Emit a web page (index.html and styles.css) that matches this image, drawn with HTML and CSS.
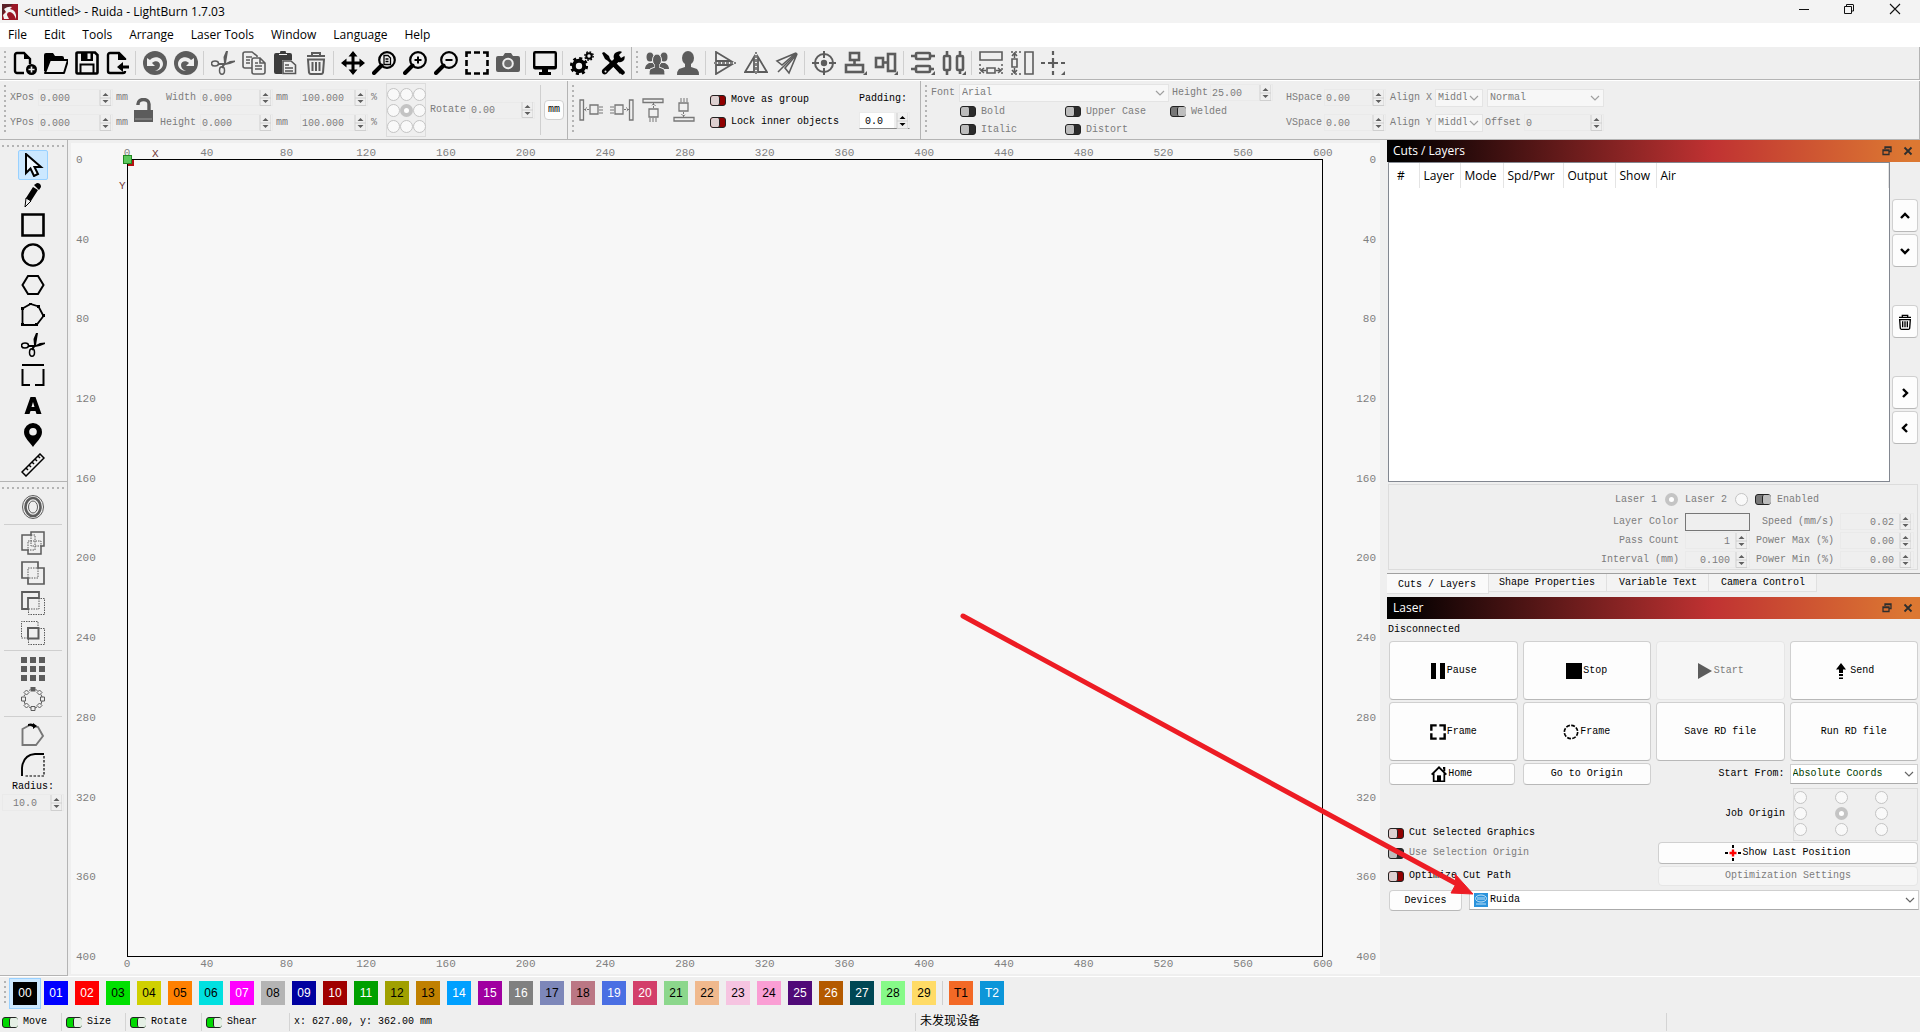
FILE: index.html
```html
<!DOCTYPE html>
<html lang="en">
<head>
<meta charset="utf-8">
<title>&lt;untitled&gt; - Ruida - LightBurn 1.7.03</title>
<link rel="stylesheet" href="styles.css">
</head>
<body>
<svg class="defs" aria-hidden="true">
  <symbol id="new" viewBox="0 0 24 24"><path d="M11 22H4a2 2 0 0 1-2-2V4a2 2 0 0 1 2-2h7l6 6v5" fill="none" stroke="currentColor" stroke-width="2.4"/><path d="M11 1l7 7h-7z"/><circle cx="18.500" cy="18.500" r="5.500"/><path d="M18.500 15.500v6M15.500 18.500h6" stroke="#efefef" stroke-width="1.600"/></symbol>
  <symbol id="open" viewBox="0 0 24 24"><path d="M6 9h18l-4 13H1z" fill="none" stroke="currentColor" stroke-width="2" stroke-linejoin="round"/><path d="M0 4q0-2 2-2h7l2 3h7q2 0 2 2v1H6L2 20H0z"/></symbol>
  <symbol id="save" viewBox="0 0 24 24"><path d="M1.500 2.500a1 1 0 0 1 1-1H20l2.500 2.500v17.500a1 1 0 0 1-1 1h-19a1 1 0 0 1-1-1z" fill="none" stroke="currentColor" stroke-width="2.600"/><path d="M6 1h12v9H6z"/><path d="M12.500 2.500h3v5.500h-3z" fill="#efefef"/><path d="M5.500 22v-8.500h13V22" fill="none" stroke="currentColor" stroke-width="2"/></symbol>
  <symbol id="import" viewBox="0 0 24 24"><path d="M19 9V8l-6-6H4a2 2 0 0 0-2 2v16a2 2 0 0 0 2 2h13a2 2 0 0 0 2-2" fill="none" stroke="currentColor" stroke-width="2.400"/><path d="M12 1l8 8h-8zM11 16l6-5v3.500h6v3h-6V21z"/></symbol>
  <symbol id="undo" viewBox="0 0 24 24"><circle cx="12" cy="12" r="12"/><path d="M4 7v8h8l-3-3c3-3 8-2 8 2 0 3-2 5-5 6 4 0 8-3 8-7 0-7-9-9-13-4z" fill="#efefef"/></symbol>
  <symbol id="cut" viewBox="0 0 24 24"><path d="M13 12L12.500 6 15 0h2l-2 12-2 3zM13 13l6-3 5-.500v1.500l-5 2-5 1z"/><path d="M13 13H8M13 13l-2 4" stroke="currentColor" stroke-width="2"/><ellipse cx="4" cy="12.500" rx="3.500" ry="2.500" fill="none" stroke="currentColor" stroke-width="1.500"/><ellipse cx="11" cy="19.500" rx="2.500" ry="3.700" fill="none" stroke="currentColor" stroke-width="1.500"/></symbol>
  <symbol id="copy" viewBox="0 0 24 24"><g fill="none" stroke="currentColor" stroke-width="1.600"><path d="M10 17H3a2 2 0 0 1-2-2V3a2 2 0 0 1 2-2h7l5 4v1M12 7h6l5 5v9a2 2 0 0 1-2 2h-9a2 2 0 0 1-2-2V9a2 2 0 0 1 2-2zM18 7v5h5"/><path d="M4 6h6M4 9h4M4 12h4M13 12h3M13 15h7M13 18h7"/></g></symbol>
  <symbol id="paste" viewBox="0 0 24 24"><path d="M1 4a2 2 0 0 1 2-2h4a3 3 0 0 1 6 0h4a2 2 0 0 1 2 2v5H9v14H3a2 2 0 0 1-2-2z" fill="#3c3c3c"/><path d="M6 3.500h8" stroke="#efefef"/><path d="M10 10h8l4.500 4v8.500H10z" fill="#efefef" stroke="#555" stroke-width="1.600"/><path d="M12 14h4M12 17h8M12 20h8" stroke="#555" stroke-width="1.500"/></symbol>
  <symbol id="trash" viewBox="0 0 24 24"><path d="M3 5h18M4 8.500l1 13a2 2 0 0 0 2 1.500h10a2 2 0 0 0 2-1.500l1-13zM8 4V2h8v2M8.500 11v9M12 11v9M15.500 11v9" fill="none" stroke="currentColor" stroke-width="2"/></symbol>
  <symbol id="move" viewBox="0 0 24 24"><path d="M12 2v20M2 12h20" stroke="currentColor" stroke-width="3"/><path d="M12 0l4.500 5.500h-9zM12 24l-4.500-5.500h9zM0 12l5.500-4.500v9zM24 12l-5.500 4.500v-9z"/></symbol>
  <symbol id="lens" viewBox="0 0 24 24"><circle cx="15" cy="9" r="7.800" fill="none" stroke="currentColor" stroke-width="2.200"/><path d="M9.500 14.500L2 22" stroke="currentColor" stroke-width="4" stroke-linecap="round"/></symbol>
  <symbol id="zpage" viewBox="0 0 24 24"><use href="#lens"/><path d="M12 4.500h4l2.500 2.500v6.500H12zM13.500 8h3M13.500 10.500h3" fill="none" stroke="currentColor" stroke-width="1.300"/></symbol>
  <symbol id="zin" viewBox="0 0 24 24"><use href="#lens"/><path d="M11.500 9h7M15 5.500v7" stroke="currentColor" stroke-width="2"/></symbol>
  <symbol id="zout" viewBox="0 0 24 24"><use href="#lens"/><path d="M11.500 9h7" stroke="currentColor" stroke-width="2"/></symbol>
  <symbol id="frame" viewBox="0 0 24 24"><path d="M1.500 6V1.500H6M18 1.500h4.500V6M22.500 18v4.500H18M6 22.500H1.500V18M9 1.500h6M9 22.500h6M1.500 9v6M22.500 9v6" fill="none" stroke="currentColor" stroke-width="2.600"/></symbol>
  <symbol id="camera" viewBox="0 0 24 24"><path d="M2 5h5l2-3h6l2 3h5a2 2 0 0 1 2 2v12a2 2 0 0 1-2 2H2a2 2 0 0 1-2-2V7a2 2 0 0 1 2-2z"/><circle cx="12" cy="12.500" r="4.800" fill="#707070" stroke="#efefef" stroke-width="2"/></symbol>
  <symbol id="monitor" viewBox="0 0 24 24"><rect x="1.200" y="1.200" width="21.600" height="16" rx="1" fill="none" stroke="currentColor" stroke-width="2.400"/><path d="M1 15h22v3H1zM9 18h6v3h3v3H6v-3h3z"/></symbol>
  <symbol id="gears" viewBox="0 0 24 24"><circle cx="9" cy="15" r="5.200" fill="none" stroke="currentColor" stroke-width="4"/><circle cx="9" cy="15" r="7.800" fill="none" stroke="currentColor" stroke-width="2.600" stroke-dasharray="3.060 3.060"/><circle cx="19" cy="5" r="2.700" fill="none" stroke="currentColor" stroke-width="2"/><circle cx="19" cy="5" r="4.200" fill="none" stroke="currentColor" stroke-width="1.400" stroke-dasharray="1.650 1.650"/></symbol>
  <symbol id="tools" viewBox="0 0 24 24"><path d="M1 2l2-1 5 4 1 3 12 12-2 3L7 10 4 8zM16 1c2-1 4-1 5 0l-3 3 2 3 3.500-2c1 4-2 7-6 6L7 21c-1 2-3 3-5 2-2-2-1-4 0-5L13 8c-1-3 0-6 3-7z"/><path d="M14 14l7.500 7.500" stroke="currentColor" stroke-width="4.500" stroke-linecap="round"/><circle cx="4.500" cy="20.500" r="1" fill="#efefef"/></symbol>
  <symbol id="user" viewBox="0 0 24 24"><ellipse cx="12" cy="7" rx="6" ry="7"/><path d="M9 12h6v4l6 2q2 2 2 6H1q0-4 2-6l6-2z"/></symbol>
  <symbol id="group" viewBox="0 0 24 24"><ellipse cx="5" cy="6" rx="3.500" ry="4.500"/><ellipse cx="19" cy="6" rx="3.500" ry="4.500"/><path d="M0 18q0-4 4-6h16q4 2 4 6z"/><g stroke="#efefef"><ellipse cx="12" cy="9" rx="4.500" ry="6"/><path d="M10 14h4v2l5 2q1 2 1 6H4q0-4 1-6l5-2z"/></g><path d="M10 13h4v5h-4z"/></symbol>
  <symbol id="flipv" viewBox="0 0 24 24"><path d="M3 1v9h15zM3 23v-9h15z" fill="none" stroke="currentColor" stroke-width="1.800"/><path d="M1 12h22" stroke="currentColor" stroke-width="1.500" stroke-dasharray="3 1"/></symbol>
  <symbol id="flipd" viewBox="0 0 24 24"><path d="M21 2L2 10l5 4zM22 3l-8 19-4-5z" fill="none" stroke="currentColor" stroke-width="1.600"/><path d="M22 2L3 21" stroke="currentColor" stroke-width="1.600"/></symbol>
  <symbol id="target" viewBox="0 0 24 24"><circle cx="12" cy="12" r="9" fill="none" stroke="currentColor" stroke-width="2"/><path d="M12 0v7M12 17v7M0 12h7M17 12h7" stroke="currentColor" stroke-width="2"/><circle cx="12" cy="12" r="3.200"/></symbol>
  <symbol id="alignc" viewBox="0 0 24 24"><g fill="none" stroke="currentColor" stroke-width="2.600"><rect x="7" y="2" width="9" height="7"/><rect x="3" y="14" width="17" height="7"/><path d="M11.500 9v5"/></g><path d="M24 20v4h-4z"/></symbol>
  <symbol id="alignm" viewBox="0 0 24 24"><g fill="none" stroke="currentColor" stroke-width="2.600"><rect x="2" y="7" width="7" height="9"/><rect x="14" y="3" width="7" height="17"/><path d="M9 11.500h5"/></g><path d="M24 20v4h-4z"/></symbol>
  <symbol id="distc" viewBox="0 0 24 24"><g fill="none" stroke="currentColor" stroke-width="2.600"><rect x="5" y="2" width="14" height="6" rx="1"/><rect x="5" y="15" width="14" height="6" rx="1"/><path d="M0 5h5M19 5h5M0 18h5M19 18h4"/></g><path d="M24 20v4h-4z"/></symbol>
  <symbol id="distm" viewBox="0 0 24 24"><g fill="none" stroke="currentColor" stroke-width="2.600"><rect x="2" y="5" width="6" height="14" rx="1"/><rect x="15" y="5" width="6" height="14" rx="1"/><path d="M5 0v5M5 19v5M18 0v5M18 19v4"/></g><path d="M24 20v4h-4z"/></symbol>
  <symbol id="samew" viewBox="0 0 24 24"><path d="M1 1h22v8H1zM8 17h8v5H8z" fill="none" stroke="currentColor" stroke-width="1.600"/><path d="M1 13v11M23 13v11" stroke="currentColor" stroke-width="1.500" stroke-dasharray="2 2"/><path d="M2 19.500h5M17 19.500h5M5 17l-3 2.500L5 22M19 17l3 2.500-3 2.500" fill="none" stroke="currentColor" stroke-width="1.500"/></symbol>
  <symbol id="cross" viewBox="0 0 24 24"><path d="M12 0v4M12 20v4M0 12h4M20 12h4M12 7v10M7 12h10" stroke="currentColor" stroke-width="2.200"/><path d="M24 20v4h-4z"/></symbol>
  <symbol id="lock" viewBox="0 0 20 24"><path d="M4 7V6c0-6 11-6 11 0v6" fill="none" stroke="currentColor" stroke-width="3.400"/><path d="M0 12h19v12H0z"/><path d="M1 21h17" stroke="#999"/></symbol>
  <symbol id="dock" viewBox="0 0 24 24"><path d="M1 2h3.500v20H1zM11 7h8v9h-8z" fill="none" stroke="currentColor" stroke-width="1.300"/><path d="M5 11.500h5M8 9.500l-2.500 2L8 13.500M21 8v8M23 8v8" fill="none" stroke="currentColor" stroke-width="1" stroke-dasharray="2 1"/></symbol>
  <symbol id="arrow" viewBox="0 0 24 24"><path d="M5 1v19l4.500-4.500L13 23l4-2-3.500-7H20z" fill="#eef7ff" stroke="currentColor" stroke-width="2"/></symbol>
  <symbol id="pencil" viewBox="0 0 24 24"><path d="M13 2l3-2q4 0 4 4l-2 3zM12 4l5 3-7 11-5-3z"/><path d="M5 15l5 3-6 6z" fill="none" stroke="currentColor"/></symbol>
  <symbol id="rect" viewBox="0 0 24 24"><path d="M1.500 1.500h21v21h-21z" fill="none" stroke="currentColor" stroke-width="2.600"/></symbol>
  <symbol id="circle" viewBox="0 0 24 24"><circle cx="12" cy="12" r="10.600" fill="none" stroke="currentColor" stroke-width="2.400"/></symbol>
  <symbol id="hex" viewBox="0 0 24 24"><path d="M1.500 12L7 3h10l5.500 9L17 21H7z" fill="none" stroke="currentColor" stroke-width="2"/></symbol>
  <symbol id="poly" viewBox="0 0 24 24"><path d="M1.500 5.500L9.500 1l8 2.500 5 9.500-7 9h-14z" fill="none" stroke="currentColor" stroke-width="1.800"/><path d="M0 4h3v3H0zM8 0h3v2H8zM16 2h3v3h-3zM21 11h3v3h-3zM14 20h3v3h-3zM0 20h3v3H0z"/></symbol>
  <symbol id="tabs" viewBox="0 0 24 24"><path d="M1 2h22M1.500 6v16H9M22.500 6v16H14" fill="none" stroke="currentColor" stroke-width="2"/></symbol>
  <symbol id="texta" viewBox="0 0 24 24"><path d="M3.500 21L9.500 4h5l6 17h-5l-1-3h-5l-1 3zM10.500 14h3L12 9z" fill-rule="evenodd"/></symbol>
  <symbol id="pin" viewBox="0 0 24 24"><path d="M12 0a9 9 0 0 1 9 9c0 6-6 10-9 15C9 19 3 15 3 9a9 9 0 0 1 9-9zm0 5a3.800 3.800 0 1 0 0 7.600A3.800 3.800 0 0 0 12 5z" fill-rule="evenodd"/></symbol>
  <symbol id="ruler" viewBox="0 0 24 24"><path d="M1 19L19 1l4 4L5 23zM5 15l2 2M8 12l2 2M11 9l2 2M14 6l2 2M17 3l2 2" fill="none" stroke="currentColor" stroke-width="1.500"/></symbol>
  <symbol id="offset" viewBox="0 0 24 24"><g fill="none" stroke="currentColor"><ellipse cx="12" cy="12" rx="10.500" ry="11.500"/><ellipse cx="12" cy="12" rx="7.500" ry="9" stroke-width="2.600"/><ellipse cx="12" cy="12" rx="4.500" ry="6"/></g></symbol>
  <symbol id="union3" viewBox="0 0 24 24"><path d="M1 4h9V1h13v14h-3v8H7v-4H1z" fill="none" stroke="currentColor" stroke-width="1.500"/><path d="M10 4h4v15H7v-9h13v5H10z" fill="none" stroke="currentColor" stroke-dasharray="1.500 1"/></symbol>
  <symbol id="union" viewBox="0 0 24 24"><path d="M1 1h16v6h6v16H7v-6H1z" fill="none" stroke="currentColor" stroke-width="1.700"/><path d="M7 7h10v10H7z" fill="none" stroke="currentColor" stroke-dasharray="1.500 1"/></symbol>
  <symbol id="subtract" viewBox="0 0 24 24"><path d="M1 1h17v6H7v11H1z" fill="none" stroke="currentColor" stroke-width="1.800"/><path d="M7.500 18v5.500h16v-16H18V18H7" fill="none" stroke="currentColor" stroke-dasharray="1.500 1"/></symbol>
  <symbol id="intersect" viewBox="0 0 24 24"><path d="M7 17H.5V.5h16.500V7M7.500 18v5.500h16v-16H18" fill="none" stroke="currentColor" stroke-dasharray="1.500 1"/><path d="M7 7h10.500v10.500H7z" fill="none" stroke="currentColor" stroke-width="2"/></symbol>
  <symbol id="grid" viewBox="0 0 24 24"><path d="M0 0h6v6H0zM9 0h6v6H9zM18 0h6v6h-6zM0 9h6v6H0zM9 9h6v6H9zM18 9h6v6h-6zM0 18h6v6H0zM9 18h6v6H9zM18 18h6v6h-6z"/></symbol>
  <symbol id="radial" viewBox="0 0 24 24"><path d="M9.500 0h5v4.500h-5z"/><g fill="none" stroke="currentColor"><path d="M10 19.500h4v4h-4zM.5 10h4v4h-4zM19.500 10h4v4h-4zM5.500 3l2.500 2.500L5.500 8 3 5.500zM18.500 3L21 5.500 18.500 8 16 5.500zM5.500 16L8 18.500 5.500 21 3 18.500zM18.500 16l2.500 2.500-2.500 2.500-2.500-2.500z"/><path d="M8 3.500l1.500-1M3 9l1-1.500M14.500 2.500l2 1M20 7.500l1 2.500M3 14l1 3M21 14l-1 3M8 20l2 1M16 20l-2 1"/></g></symbol>
  <symbol id="polystart" viewBox="0 0 24 24"><path d="M1.500 6L9 2l8 2 5 9-7 9H1.500z" fill="none" stroke="#777" stroke-width="1.900"/><path d="M7 1q3-1 5 0V0l4 3-4 3V4q-3-2-5-1z" fill="#000"/></symbol>
  <symbol id="radius" viewBox="0 0 24 24"><path d="M1 23V15Q2 2 14 1h9" fill="none" stroke="#000" stroke-width="1.900"/><path d="M23 3v20H3" fill="none" stroke="#000" stroke-width="1.200" stroke-dasharray="2.500 1.500"/></symbol>
  <symbol id="cframe" viewBox="0 0 24 24"><circle cx="12" cy="12" r="10" fill="none" stroke="currentColor" stroke-width="2.500" stroke-dasharray="5.850 2"/></symbol>
  <symbol id="qframe" viewBox="0 0 24 24"><path d="M2 10V2h8M14 2h8v8M22 14v8h-8M10 22H2v-8" fill="none" stroke="currentColor" stroke-width="3.600"/></symbol>
  <symbol id="home" viewBox="0 0 24 24"><path d="M1 13L12 2l11 11M18 3h2v5" fill="none" stroke="currentColor" stroke-width="2.800"/><path d="M4 11v12h16V11" fill="none" stroke="currentColor" stroke-width="2.600"/><path d="M9 14h6v10H9z"/></symbol>
  <symbol id="updown" viewBox="0 0 12 16"><path d="M1 0v15.500h11V0M1 8h11" fill="none" stroke="#cfcfcf"/><path d="M6.500 3l3 3h-6zM6.500 13l-3-3h6z" fill="currentColor"/></symbol>
  <symbol id="chev" viewBox="0 0 10 10"><path d="M1 3l4 4 4-4" fill="none" stroke="currentColor" stroke-width="1.200"/></symbol>
  <symbol id="bchev" viewBox="0 0 10 10"><path d="M1 7l4-4 4 4" fill="none" stroke="currentColor" stroke-width="2.400"/></symbol>
  <symbol id="float" viewBox="0 0 10 10"><path d="M3 3V1h6v4.500H7M1 4h6v4.500H1zM3 1.500h6M1 4.500h6" fill="none" stroke="currentColor" stroke-width="1.300"/></symbol>
  <symbol id="x" viewBox="0 0 10 10"><path d="M1.500 1.500l7 7M8.500 1.500l-7 7" stroke="currentColor" stroke-width="1.800"/></symbol>
</svg>

<header class="titlebar">
  <svg class="logo" viewBox="0 0 16 16"><path d="M0 0h16v16H0z" fill="#9b1726"/><path d="M0 0h11L4 6 0 12z" fill="#5b2027"/><path d="M2 5q4-3 8-2l-2 2q7 1 6 10-2-6-6-7-3 0-3 3l2 4H2l-1-4 3-3z" fill="#f2f2f2"/></svg>
  <span class="title">&lt;untitled&gt; - Ruida - LightBurn 1.7.03</span>
  <div class="winbtns">
    <button aria-label="Minimize"><svg viewBox="0 0 10 10"><path d="M0 5.500h10" stroke="#111"/></svg></button>
    <button aria-label="Restore"><svg viewBox="0 0 10 10"><path d="M.5 2.500h7v7h-7zM2.500 2V.5H9q.5 0 .5.5v6H8" fill="none" stroke="#111"/></svg></button>
    <button aria-label="Close"><svg viewBox="0 0 10 10"><path d="M0 0l10 10M10 0L0 10" stroke="#111" stroke-width="1.100"/></svg></button>
  </div>
</header>
<nav class="menubar"><a href="#">File</a><a href="#">Edit</a><a href="#">Tools</a><a href="#">Arrange</a><a href="#">Laser Tools</a><a href="#">Window</a><a href="#">Language</a><a href="#">Help</a></nav>

<div class="toolbar icons">
  <div class="strip">
    <i class="grip"></i>
    <button aria-label="New"><svg><use href="#new"/></svg></button><button aria-label="Open"><svg><use href="#open"/></svg></button><button aria-label="Save"><svg><use href="#save"/></svg></button><button aria-label="Import"><svg><use href="#import"/></svg></button>
    <i class="sep"></i>
    <button class="dim" aria-label="Undo"><svg><use href="#undo"/></svg></button><button class="dim mirror" aria-label="Redo"><svg><use href="#undo"/></svg></button>
    <i class="sep"></i>
    <button class="dim" aria-label="Cut"><svg><use href="#cut"/></svg></button><button class="dim" aria-label="Copy"><svg><use href="#copy"/></svg></button><button aria-label="Paste"><svg><use href="#paste"/></svg></button><button class="dim" aria-label="Delete"><svg><use href="#trash"/></svg></button>
    <i class="sep"></i>
    <button aria-label="Pan"><svg><use href="#move"/></svg></button><button aria-label="Zoom to page"><svg><use href="#zpage"/></svg></button><button aria-label="Zoom in"><svg><use href="#zin"/></svg></button><button aria-label="Zoom out"><svg><use href="#zout"/></svg></button><button aria-label="Frame selection"><svg><use href="#frame"/></svg></button><button class="dim" aria-label="Camera"><svg><use href="#camera"/></svg></button>
    <i class="sep"></i>
    <button aria-label="Preview"><svg><use href="#monitor"/></svg></button>
    <i class="sep"></i>
    <button aria-label="Settings"><svg><use href="#gears"/></svg></button><button aria-label="Device settings"><svg><use href="#tools"/></svg></button>
  </div>
  <div class="strip last dim">
    <i class="grip"></i>
    <button aria-label="Group"><svg><use href="#group"/></svg></button><button aria-label="Ungroup"><svg><use href="#user"/></svg></button>
    <i class="sep"></i>
    <button aria-label="Flip vertical"><svg><use href="#flipv"/></svg></button><button class="turn" aria-label="Flip horizontal"><svg><use href="#flipv"/></svg></button><button aria-label="Mirror across line"><svg><use href="#flipd"/></svg></button>
    <i class="sep"></i>
    <button aria-label="Align centers"><svg><use href="#target"/></svg></button><button aria-label="Align vertical"><svg><use href="#alignc"/></svg></button><button aria-label="Align horizontal"><svg><use href="#alignm"/></svg></button>
    <i class="sep"></i>
    <button aria-label="Distribute vertical"><svg><use href="#distc"/></svg></button><button aria-label="Distribute horizontal"><svg><use href="#distm"/></svg></button>
    <i class="sep"></i>
    <button aria-label="Same width"><svg><use href="#samew"/></svg></button><button class="cw" aria-label="Same height"><svg><use href="#samew"/></svg></button><button aria-label="Move to position"><svg><use href="#cross"/></svg></button>
  </div>
</div>

<div class="toolbar props">
  <div class="strip off">
    <i class="grip"></i>
    <div class="posgrid">
      <label for="xpos">XPos</label><span class="spin"><input id="xpos" value="0.000"><svg><use href="#updown"/></svg></span><span>mm</span>
      <button class="lock" aria-label="Lock aspect"><svg><use href="#lock"/></svg></button>
      <label class="r" for="w">Width</label><span class="spin"><input id="w" value="0.000"><svg><use href="#updown"/></svg></span><span>mm</span><span class="spin"><input aria-label="Width percent" value="100.000"><svg><use href="#updown"/></svg></span><span>%</span>
      <label for="ypos">YPos</label><span class="spin"><input id="ypos" value="0.000"><svg><use href="#updown"/></svg></span><span>mm</span>
      <label class="r" for="h">Height</label><span class="spin"><input id="h" value="0.000"><svg><use href="#updown"/></svg></span><span>mm</span><span class="spin"><input aria-label="Height percent" value="100.000"><svg><use href="#updown"/></svg></span><span>%</span>
    </div>
    <div class="anchors"><input type="radio" name="an" aria-label="Top left"><input type="radio" name="an" aria-label="Top"><input type="radio" name="an" aria-label="Top right"><input type="radio" name="an" aria-label="Left"><input type="radio" name="an" aria-label="Center" checked><input type="radio" name="an" aria-label="Right"><input type="radio" name="an" aria-label="Bottom left"><input type="radio" name="an" aria-label="Bottom"><input type="radio" name="an" aria-label="Bottom right"></div>
    <label class="rotlabel" for="rot">Rotate</label><span class="spin rot"><input id="rot" value="0.00"><svg><use href="#updown"/></svg></span>
    <i class="sep tall"></i>
    <button class="unit">mm</button>
  </div>
  <div class="strip move">
    <i class="grip"></i>
    <div class="docks"><button aria-label="Move left"><svg><use href="#dock"/></svg></button><button class="mirror" aria-label="Move right"><svg><use href="#dock"/></svg></button><button class="up" aria-label="Move up"><svg><use href="#dock"/></svg></button><button class="down" aria-label="Move down"><svg><use href="#dock"/></svg></button></div>
    <div class="checks"><label><input type="checkbox">Move as group</label><label><input type="checkbox">Lock inner objects</label></div>
    <div class="padding"><label for="pad">Padding:</label><span class="spin on"><input id="pad" value="0.0"><svg><use href="#updown"/></svg></span></div>
  </div>
  <div class="strip font last off">
    <i class="grip"></i>
    <div class="fontbox">
      <div class="fontrow"><label for="font">Font</label><span class="select wide"><select id="font"><option>Arial</option></select><svg><use href="#chev"/></svg></span><label for="fh">Height</label><span class="spin"><input id="fh" value="25.00"><svg><use href="#updown"/></svg></span></div>
      <div class="fontopts"><label><input type="checkbox">Bold</label><label><input type="checkbox">Upper Case</label><label class="set"><input type="checkbox" checked>Welded</label><label><input type="checkbox">Italic</label><label><input type="checkbox">Distort</label></div>
    </div>
    <div class="spacing">
      <div><label for="hs">HSpace</label><span class="spin"><input id="hs" value="0.00"><svg><use href="#updown"/></svg></span><label class="al" for="ax">Align X</label><span class="select mid"><select id="ax"><option>Middle</option></select><svg><use href="#chev"/></svg></span><span class="select norm"><select aria-label="Text mode"><option>Normal</option></select><svg><use href="#chev"/></svg></span></div>
      <div><label for="vs">VSpace</label><span class="spin"><input id="vs" value="0.00"><svg><use href="#updown"/></svg></span><label class="al" for="ay">Align Y</label><span class="select mid"><select id="ay"><option>Middle</option></select><svg><use href="#chev"/></svg></span><label class="of" for="off">Offset</label><span class="spin ofs"><input id="off" value="0"><svg><use href="#updown"/></svg></span></div>
    </div>
  </div>
</div>

<main class="main">
  <aside class="tools">
    <div class="box">
      <i class="dots"></i>
      <button class="sel" aria-label="Select"><svg><use href="#arrow"/></svg></button><button aria-label="Draw lines"><svg><use href="#pencil"/></svg></button><button aria-label="Rectangle"><svg><use href="#rect"/></svg></button><button aria-label="Ellipse"><svg><use href="#circle"/></svg></button><button aria-label="Polygon"><svg><use href="#hex"/></svg></button><button aria-label="Edit nodes"><svg><use href="#poly"/></svg></button><button aria-label="Trim shapes"><svg><use href="#cut"/></svg></button><button aria-label="Add tabs"><svg><use href="#tabs"/></svg></button><button aria-label="Text"><svg><use href="#texta"/></svg></button><button aria-label="Laser position"><svg><use href="#pin"/></svg></button><button aria-label="Measure"><svg><use href="#ruler"/></svg></button>
    </div>
    <div class="box grow dim">
      <i class="dots"></i>
      <button aria-label="Offset"><svg><use href="#offset"/></svg></button>
      <i class="hsep"></i>
      <button aria-label="Weld"><svg><use href="#union3"/></svg></button><button aria-label="Union"><svg><use href="#union"/></svg></button><button aria-label="Subtract"><svg><use href="#subtract"/></svg></button><button aria-label="Intersect"><svg><use href="#intersect"/></svg></button>
      <i class="hsep"></i>
      <button aria-label="Grid array"><svg><use href="#grid"/></svg></button><button aria-label="Circular array"><svg><use href="#radial"/></svg></button>
      <i class="hsep"></i>
      <button aria-label="Start point"><svg><use href="#polystart"/></svg></button><button aria-label="Fillet"><svg><use href="#radius"/></svg></button>
      <label for="rad">Radius:</label>
      <span class="spin off"><input id="rad" value="10.0"><svg><use href="#updown"/></svg></span>
    </div>
  </aside>

  <section class="canvas">
    <div class="ruler h top"><span>0</span><span>40</span><span>80</span><span>120</span><span>160</span><span>200</span><span>240</span><span>280</span><span>320</span><span>360</span><span>400</span><span>440</span><span>480</span><span>520</span><span>560</span><span>600</span></div>
    <div class="ruler v left"><span>0</span><span>40</span><span>80</span><span>120</span><span>160</span><span>200</span><span>240</span><span>280</span><span>320</span><span>360</span><span>400</span></div>
    <div class="bed"><i class="origin"></i><i class="home"></i><b class="ax">X</b><b class="ay">Y</b></div>
    <div class="ruler v end"><span>0</span><span>40</span><span>80</span><span>120</span><span>160</span><span>200</span><span>240</span><span>280</span><span>320</span><span>360</span><span>400</span></div>
    <div class="ruler h bottom"><span>0</span><span>40</span><span>80</span><span>120</span><span>160</span><span>200</span><span>240</span><span>280</span><span>320</span><span>360</span><span>400</span><span>440</span><span>480</span><span>520</span><span>560</span><span>600</span></div>
  </section>

  <aside class="dock">
    <h2>Cuts / Layers<button aria-label="Float"><svg><use href="#float"/></svg></button><button aria-label="Close"><svg><use href="#x"/></svg></button></h2>
    <div class="cuts">
      <div class="list"><table><colgroup><col class="c1"><col class="c2"><col class="c3"><col class="c4"><col class="c5"><col class="c6"><col></colgroup><thead><tr><th>#</th><th>Layer</th><th>Mode</th><th>Spd/Pwr</th><th>Output</th><th>Show</th><th>Air</th></tr></thead></table></div>
      <div class="side">
        <button aria-label="Move up"><svg><use href="#bchev"/></svg></button><button aria-label="Move down" class="flip"><svg><use href="#bchev"/></svg></button>
        <button aria-label="Delete layer" class="gap big"><svg><use href="#trash"/></svg></button>
        <button aria-label="Next" class="gap next"><svg><use href="#bchev"/></svg></button><button aria-label="Previous" class="prev"><svg><use href="#bchev"/></svg></button>
      </div>
    </div>
    <div class="layer off">
      <div class="lasers"><label>Laser 1<input type="radio" name="laser" checked></label><label>Laser 2<input type="radio" name="laser"></label><label class="set"><input type="checkbox" checked>Enabled</label></div>
      <div class="fields">
        <label for="lc">Layer Color</label><button id="lc" class="color"></button><label for="sp">Speed (mm/s)</label><span class="spin"><input id="sp" value="0.02"><svg><use href="#updown"/></svg></span>
        <label for="pc">Pass Count</label><span class="spin"><input id="pc" value="1"><svg><use href="#updown"/></svg></span><label for="pmax">Power Max (%)</label><span class="spin"><input id="pmax" value="0.00"><svg><use href="#updown"/></svg></span>
        <label for="iv">Interval (mm)</label><span class="spin"><input id="iv" value="0.100"><svg><use href="#updown"/></svg></span><label for="pmin">Power Min (%)</label><span class="spin"><input id="pmin" value="0.00"><svg><use href="#updown"/></svg></span>
      </div>
    </div>
    <div class="tabs"><button class="cur">Cuts / Layers</button><button>Shape Properties</button><button>Variable Text</button><button>Camera Control</button></div>
    <h2>Laser<button aria-label="Float"><svg><use href="#float"/></svg></button><button aria-label="Close"><svg><use href="#x"/></svg></button></h2>
    <p class="status">Disconnected</p>
    <div class="btns">
      <button><svg viewBox="0 0 16 16"><path d="M1 0h5v16H1zM10 0h5v16h-5z"/></svg>Pause</button>
      <button><svg viewBox="0 0 16 16"><path d="M0 0h16v16H0z"/></svg>Stop</button>
      <button disabled><svg viewBox="0 0 16 16"><path d="M1 0l14 8-14 8z" fill="#5c5c5c"/></svg>Start</button>
      <button><svg viewBox="0 0 16 16"><path d="M8 0l5 6.500h-3V10H6V6.500H3zM6 11h4v2H6zM6 14.500h4V16H6z"/></svg>Send</button>
      <button><svg><use href="#qframe"/></svg>Frame</button>
      <button><svg><use href="#cframe"/></svg>Frame</button>
      <button>Save RD file</button>
      <button>Run RD file</button>
      <button><svg><use href="#home"/></svg>Home</button>
      <button>Go to Origin</button>
      <label for="from">Start From:</label>
      <span class="select on"><select id="from" class="green"><option>Absolute Coords</option></select><svg><use href="#chev"/></svg></span>
    </div>
    <div class="lower">
      <div class="opts"><label><input type="checkbox">Cut Selected Graphics</label><label class="off"><input type="checkbox">Use Selection Origin</label><label><input type="checkbox">Optimize Cut Path</label></div>
      <div class="job">
        <div class="jobrow"><span>Job Origin</span><div class="anchors job9"><input type="radio" name="jo" aria-label="Top left"><input type="radio" name="jo" aria-label="Top"><input type="radio" name="jo" aria-label="Top right"><input type="radio" name="jo" aria-label="Left"><input type="radio" name="jo" aria-label="Center" checked><input type="radio" name="jo" aria-label="Right"><input type="radio" name="jo" aria-label="Bottom left"><input type="radio" name="jo" aria-label="Bottom"><input type="radio" name="jo" aria-label="Bottom right"></div></div>
        <button class="pb"><svg viewBox="0 0 16 16"><path d="M8 0v3M8 13v3M0 8h3M13 8h3" stroke="#000" stroke-width="2"/><path d="M8 4.500v7M4.500 8h7" stroke="#f00" stroke-width="2.400"/></svg>Show Last Position</button>
        <button class="pb short" disabled>Optimization Settings</button>
      </div>
    </div>
    <div class="device"><button class="pb">Devices</button><span class="select on"><svg class="brand" viewBox="0 0 14 14"><path d="M0 0h14v14H0z" fill="#2b93dc"/><ellipse cx="7" cy="5.500" rx="5.500" ry="3.500" fill="none" stroke="#bfe0f7"/><path d="M4 4v3M6 4v3M8 4v3M10 4v3M2 11h10" stroke="#bfe0f7"/></svg><select aria-label="Device"><option>Ruida</option></select><svg><use href="#chev"/></svg></span></div>
  </aside>
</main>

<div class="palette">
  <i class="grip"></i>
  <button class="cur lt" style="--c:#000">00</button><button class="lt" style="--c:#00f">01</button><button class="lt" style="--c:#f00">02</button><button style="--c:#00e000">03</button><button style="--c:#d0d000">04</button><button style="--c:#ff8000">05</button><button style="--c:#00e0e0">06</button><button class="lt" style="--c:#f0f">07</button><button style="--c:#b4b4b4">08</button><button class="lt" style="--c:#0000a0">09</button><button class="lt" style="--c:#a00000">10</button><button class="lt" style="--c:#00a000">11</button><button style="--c:#a0a000">12</button><button style="--c:#c08000">13</button><button class="lt" style="--c:#00a0ff">14</button><button class="lt" style="--c:#a000a0">15</button><button class="lt" style="--c:#808080">16</button><button style="--c:#7d87b9">17</button><button style="--c:#bb7784">18</button><button class="lt" style="--c:#4a6fe3">19</button><button class="lt" style="--c:#d33f6a">20</button><button style="--c:#8cd78c">21</button><button style="--c:#f0b98d">22</button><button style="--c:#f6c4e1">23</button><button style="--c:#fa9ed4">24</button><button class="lt" style="--c:#500a78">25</button><button class="lt" style="--c:#b45a00">26</button><button class="lt" style="--c:#004754">27</button><button style="--c:#86fa88">28</button><button style="--c:#ffdb66">29</button>
  <i class="sep"></i>
  <button style="--c:#f36926">T1</button><button class="lt" style="--c:#0c96d9">T2</button>
</div>
<footer class="statusbar">
  <label class="go"><input type="checkbox" checked>Move</label><label class="go s2"><input type="checkbox" checked>Size</label><label class="go s3"><input type="checkbox" checked>Rotate</label><label class="go s4"><input type="checkbox" checked>Shear</label><span class="coords">x: 627.00, y: 362.00 mm</span><span class="msg">未发现设备</span><span class="tail"></span>
</footer>
<svg class="pointer" viewBox="0 0 520 290" aria-hidden="true"><path d="M4 4L498 272" stroke="#ed1c24" stroke-width="5" stroke-linecap="round"/><path d="M514 282l-22-1 5-9-1-10z" fill="#ed1c24" stroke="#ed1c24"/></svg>
</body>
</html>
```
FILE: styles.css
```css
* { box-sizing: border-box; }
:root {
  --mono: "Liberation Mono", "Noto Sans CJK SC", monospace;
  --ui: "Open Sans", "Noto Sans", sans-serif;
}
body {
  margin: 0;
  min-height: 100vh;
  display: flex;
  flex-direction: column;
  position: relative;
  overflow: hidden;
  background: #efefef;
  color: #000;
  font: 10px/14px var(--mono);
}
svg { fill: currentColor; overflow: visible; flex: none; }
.defs { position: absolute; width: 0; height: 0; }
button, input, select { font: inherit; color: inherit; margin: 0; }
button { padding: 0; border: 0; background: none; }
label, span, button { white-space: nowrap; }

.titlebar { display: flex; align-items: center; height: 23px; padding-left: 2px; background: #f3f3f3; }
.logo { width: 16px; height: 16px; }
.title { margin-left: 6px; font: 12px/20px var(--ui); }
.winbtns { display: flex; margin-left: auto; }
.winbtns button { width: 45px; height: 20px; }
.winbtns svg { width: 10px; height: 10px; }
.winbtns button:last-child { width: 49px; padding-right: 2px; }
.menubar { display: flex; gap: 17px; height: 23px; padding-left: 8px; background: #fff; }
.menubar a { color: #000; text-decoration: none; font: 12px/23px var(--ui); }

.toolbar { display: flex; border-top: 1px solid #fff; border-bottom: 1px solid #b4b4b4; }
.strip { display: flex; align-items: center; border-right: 1px solid #b4b4b4; }
.strip.last { flex: 1; }
.grip { flex: none; width: 2px; align-self: stretch; margin: 4px; background: repeating-linear-gradient(#b4b4b4 0 2px, transparent 2px 5px); }
.icons { height: 34px; }
.icons .grip { margin-right: 3px; }
.icons .strip:first-child { width: 632px; }
.icons button { width: 31px; height: 30px; display: grid; place-items: center; }
.icons svg { width: 24px; height: 24px; }
.sep { flex: none; width: 1px; height: 24px; margin: 0 3px 0 2px; background: #cfcfcf; }
.dim { color: #5c5c5c; }
.mirror svg { transform: scaleX(-1); }
.turn svg { transform: rotate(-90deg); }
.cw svg { transform: rotate(90deg); }
.up svg { transform: rotate(90deg); }
.down svg { transform: rotate(-90deg); }

.off { color: #7c7c7c; }
.props { height: 60px; }
.spin { display: flex; align-items: center; height: 17px; border: 1px solid #eaeaea; min-width: 0; }
.spin input { flex: 1; min-width: 0; width: 0; height: 15px; padding: 1px 1px 0; border: 0; background: none; outline: 0; }
.spin svg { width: 12px; height: 16px; margin-right: 1px; color: #606060; }
.spin.on { background: linear-gradient(90deg, #fff 34px, #efefef 34px); border-bottom-color: #888; }
.spin.on svg { color: #000; }
.posgrid { display: grid; grid-template-columns: 28px 75px 21px 19px 47px 73px 27px 68px 18px; grid-template-rows: 25px 25px; align-items: center; }
.posgrid > span:not(.spin) { padding-left: 3px; }
.r { text-align: right; padding-right: 4px; }
.lock { grid-row: 1 / span 2; grid-column: 4; color: #5c5c5c; }
.lock svg { width: 20px; height: 24px; display: block; }
input[type=radio] { appearance: none; width: 13px; height: 13px; border: 1px solid #c4c4c4; border-radius: 50%; background: #f9f9f9; }
input[type=radio]:checked { border: 4px solid #c4c4c4; background: #fff; }
.anchors { display: grid; grid-template-columns: repeat(3, 13px); grid-template-rows: repeat(3, 16px); align-items: center; width: 40px; height: 54px; padding-top: 2px; border: 1px solid #dcdcdc; }
.rotlabel { margin-left: 4px; width: 39px; }
.rot { width: 66px; }
.tall { height: 50px; margin: 0 3px 0 5px; }
.unit { width: 20px; height: 20px; margin-right: 3px; border: 1px solid #d0d0d0; border-radius: 4px; background: #fdfdfd; color: #000; }
.docks { display: flex; color: #777; margin-left: 1px; }
.docks button { width: 31px; height: 24px; padding-right: 7px; }
.docks button svg { width: 24px; height: 24px; }
.checks { display: grid; grid-template-rows: 22px 22px; margin-left: 7px; padding-top: 2px; width: 149px; }
label:has(> input[type=checkbox]) { display: flex; align-items: center; gap: 5px; }
input[type=checkbox] { appearance: none; flex: none; width: 16px; height: 11px; border: 1px solid #222; border-radius: 3px; background: #900000; }
input[type=checkbox]::before { content: ""; display: block; width: 8px; height: 9px; background: #ddd0d0; border-right: 1px solid #222; border-radius: 2px; }
.off input[type=checkbox] { background: #2c2c2c; }
.off input[type=checkbox]::before { background: #bdbdbd; }
.set input[type=checkbox], .off .set input[type=checkbox] { background: #777; }
input[type=checkbox]:checked::before { margin-left: 6px; border-right: 0; border-left: 1px solid #222; }
.go input[type=checkbox] { background: #00d800; }
.go input[type=checkbox]::before { background: #e4efe4; }
.padding { display: grid; gap: 6px; width: 61px; padding-right: 10px; padding-top: 1px; }
.padding input { padding-left: 5px; }
.fontbox { display: grid; grid-template-rows: 20px 36px; padding-top: 1px; }
.fontrow { display: grid; grid-template-columns: 28px 210px 41px 63px; align-items: center; }
.fontrow label:nth-of-type(2) { padding-left: 3px; }
.fontopts { display: grid; grid-template-columns: 105px 105px auto; grid-template-rows: 18px 18px; padding-left: 29px; }
.select { display: flex; align-items: center; position: relative; height: 18px; border: 1px solid #e4e4e4; background: #f7f7f7; }
.select select { appearance: none; flex: 1; min-width: 0; width: 0; height: 16px; padding: 0 2px; border: 0; background: none; outline: 0; overflow: hidden; }
.select > svg:last-child { width: 10px; height: 10px; margin-right: 3px; color: #a0a0a0; }
.select.on { height: 20px; background: #fff; border: 1px solid #cfcfcf; border-bottom-color: #aaa; }
.select.on select { opacity: 1; }
.select.on > svg:last-child { color: #666; }
.spacing { display: grid; grid-template-rows: 25px 25px; margin-left: 13px; }
.spacing > div { display: flex; align-items: center; }
.spacing label { width: 38px; }
.spacing .spin { width: 62px; }
.spacing .al { width: 49px; padding-left: 4px; }
.mid { width: 48px; }
.norm { width: 117px; margin-left: 4px; }
.spacing .of { width: 41px; padding-left: 2px; }
.spacing .ofs { width: 80px; }

.main { flex: 1; display: flex; }
.tools { width: 68px; flex: none; display: flex; flex-direction: column; border-right: 1px solid #b4b4b4; border-bottom: 1px solid #b4b4b4; margin-right: 3px; }
.box { display: flex; flex-direction: column; align-items: center; padding: 5px 2px 1px 1px; border-bottom: 1px solid #b4b4b4; }
.box.grow { flex: 1; border: 0; }
.box > button { width: 30px; height: 30px; display: grid; place-items: center; }
.box > button svg { width: 24px; height: 24px; }
.box > .sel { background: #cce8ff; border: 1px solid #99d1ff; border-radius: 2px; }
.dots { width: 62px; height: 2px; margin-bottom: 3px; background: repeating-linear-gradient(90deg, #b4b4b4 0 2px, transparent 2px 5px); }
.hsep { width: 58px; height: 1px; margin: 2px 0 3px; background: #cfcfcf; }
.box label { color: #000; }
.box .spin { width: 62px; padding-left: 9px; }

.canvas { flex: 1; display: grid; grid-template-columns: 56px 1fr 57px; grid-template-rows: 16px 1fr 17px; margin: 3px 7px 2px 0; background: #f7f7f7; color: #808080; font: 11px/12px var(--mono); }
.ruler { display: flex; justify-content: space-between; }
.h { grid-column: 2; }
.h span { width: 0; display: flex; justify-content: center; }
.top { grid-row: 1; align-items: end; }
.bottom { grid-row: 3; padding-top: 1px; }
.v { grid-row: 2; flex-direction: column; }
.v span { height: 0; display: flex; align-items: center; }
.left { grid-column: 1; padding: 1px 0 0 5px; }
.end { grid-column: 3; align-items: flex-end; padding: 1px 4px 0 0; }
.bed { grid-area: 2 / 2; position: relative; border: 1px solid #000; }
.bed i { position: absolute; width: 9px; height: 9px; }
.bed .origin { left: -5px; top: -5px; background: #5cc85c; border: 1px solid #228822; z-index: 1; }
.bed .home { left: 0; top: 0; width: 6px; height: 6px; background: #b01010; }
.bed b { position: absolute; font-weight: 400; color: #703838; }
.bed .ax { left: 24px; top: -12px; }
.bed .ay { left: -9px; top: 20px; }

.dock { width: 533px; flex: none; }
h2 { display: flex; align-items: center; gap: 11px; height: 22px; margin: 0; padding: 0 7px 0 6px; color: #fff; font: 12px/22px var(--ui); background: linear-gradient(90deg, #000 2%, #c03232 61%, #dc7832 98%); }
h2 button { color: #2e2e2e; }
h2 button:first-of-type { margin-left: auto; }
h2 svg { width: 10px; height: 10px; display: block; }
.cuts { display: flex; gap: 2px; padding: 0 2px 0 1px; }
.list { flex: 1; min-height: 320px; border: 1px solid #828790; background: #fff; }
table { width: 100%; border-collapse: collapse; table-layout: fixed; font: 12px/25px var(--ui); }
th { padding: 0 0 0 4px; text-align: left; font-weight: 400; border-right: 1px solid #e4e4e4; }
th:first-child { padding-left: 8px; }
.c1 { width: 30px; }
.c2 { width: 41px; }
.c3 { width: 43px; }
.c4 { width: 60px; }
.c5 { width: 52px; }
.c6 { width: 41px; }
.side { width: 26px; padding-top: 37px; display: flex; flex-direction: column; gap: 2px; }
.side button { height: 33px; display: grid; place-items: center; }
.side svg { width: 10px; height: 10px; }
.side .big svg { width: 16px; height: 16px; }
.side .gap { margin-top: 36px; }
.side .flip svg { transform: rotate(180deg); }
.side .next svg { transform: rotate(90deg); }
.side .prev svg { transform: rotate(-90deg); }
.side button, .btns button, .pb { border: 1px solid #d0d0d0; border-bottom-color: #b8b8b8; border-radius: 4px; background: #fdfdfd; }
.layer { margin: 2px 2px 0 1px; height: 86px; padding: 5px 3px 0 0; border: 1px solid #dcdcdc; }
.lasers { display: flex; align-items: center; height: 19px; margin-right: 95px; justify-content: flex-end; gap: 7px; }
.lasers label { display: flex; align-items: center; gap: 8px; }
.lasers label.set { gap: 6px; }
.fields { display: grid; grid-template-columns: 1fr 65px 78px 74px; grid-template-rows: repeat(3, 19px); align-items: center; column-gap: 6px; justify-items: end; margin-top: 3px; }
.fields .spin, .fields .color { width: 100%; }
.fields .spin input { text-align: right; padding-right: 5px; }
.fields .spin svg { margin-right: 2px; }
.color { height: 18px; border: 1px solid #777; }
.tabs { display: flex; margin: 3px 0 4px; height: 20px; border-top: 1px solid #a0a0a0; align-items: flex-start; }
.tabs button { height: 18px; padding: 1px 11px 0 12px; border-right: 1px solid #e0e0e0; border-bottom: 1px solid #e0e0e0; background: #f3f3f3; }
.tabs button.cur { height: 20px; padding: 2px 12px 0 11px; background: #fafafa; }
.tabs .cur + button { padding-left: 10px; }
.status { margin: 0; padding: 4px 1px; }
.btns { display: grid; grid-template-columns: repeat(4, 1fr); grid-template-rows: 59px 59px 22px; gap: 2px 5px; padding: 0 2px; text-align: right; align-items: center; }
.btns button { height: 100%; display: flex; align-items: center; justify-content: center; gap: 1px; }
.btns svg, .pb svg { width: 16px; height: 16px; }
.btns button:disabled, .pb:disabled { color: #7c7c7c; background: #f6f6f6; border-color: #e6e6e6; }
.btns button:nth-child(9) { margin-right: 3px; }
.green { color: #003c00; }
.lower { display: flex; padding: 2px 2px 1px; }
.opts { width: 269px; padding-top: 36px; display: grid; grid-template-rows: 20px 20px 26px; }
.opts label { margin-left: -1px; }
.job { flex: 1; display: grid; grid-template-rows: 54px 22px 21px; gap: 1px; }
.short { margin-top: 1px; }
.jobrow { display: flex; align-items: center; justify-content: flex-end; gap: 8px; }
.anchors.job9 { width: 125px; height: 53px; grid-template-columns: 41px 40px 13px; padding: 1px 0 0; }
.pb { display: flex; align-items: center; justify-content: center; gap: 1px; }
.device { display: flex; gap: 7px; padding: 0 1px 0 2px; }
.device .pb { width: 73px; height: 21px; }
.device .select { flex: 1; padding-left: 4px; }
.brand { width: 14px; height: 14px; }

.palette { display: flex; align-items: center; height: 34px; padding-bottom: 1px; border-top: 1px solid #fff; }
.palette button { width: 24px; height: 24px; margin-right: 7px; background: var(--c); color: #000; font: 12px/24px "Liberation Sans", sans-serif; }
.palette button.lt { color: #fff; }
.palette button.cur { width: 30px; height: 29px; margin: 0 4px 0 0; border: 3px solid #cce8ff; outline: 1px solid #99d1ff; line-height: 23px; }
.palette .sep { margin: 0 6px 0 -1px; }
.statusbar { display: flex; align-items: center; height: 22px; padding: 2px 0 0 2px; }
.statusbar > * { height: 18px; display: flex; align-items: center; }
.statusbar .go { width: 59px; }
.statusbar .s2, .statusbar .s3, .statusbar .s4, .coords, .msg, .tail { border-left: 1px solid #d4d4d4; padding-left: 4px; }
.statusbar .s2 { width: 64px; }
.statusbar .s3 { width: 76px; }
.statusbar .s4 { width: 88px; }
.coords { width: 626px; }
.msg { flex: 1; font-size: 12px; }
.tail { width: 254px; }
.pointer { position: absolute; left: 959px; top: 612px; width: 520px; height: 290px; }
```
